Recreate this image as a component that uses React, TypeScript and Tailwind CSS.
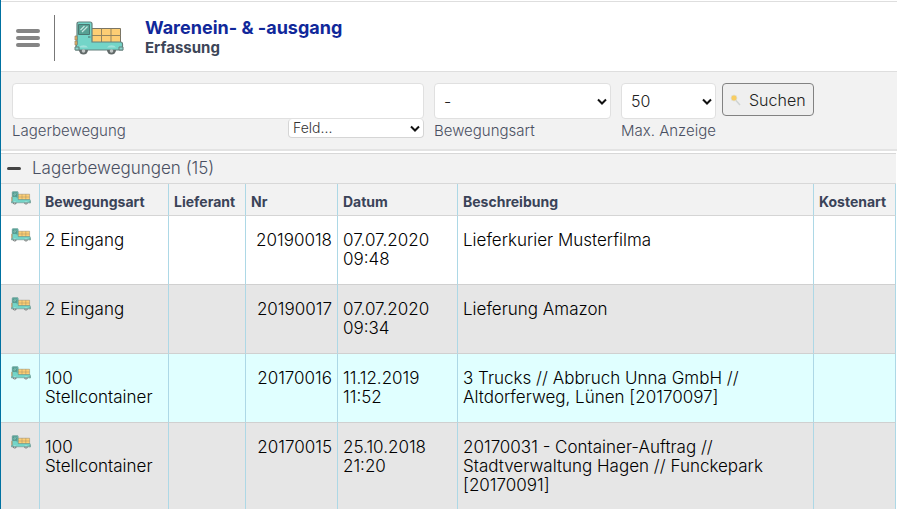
type Movement = {
  art: string;
  nr: string;
  datum: string;
  beschreibung: string;
  highlighted?: boolean;
};

const movements: Movement[] = [
  { art: "2 Eingang", nr: "20190018", datum: "07.07.2020 09:48", beschreibung: "Lieferkurier Musterfilma" },
  { art: "2 Eingang", nr: "20190017", datum: "07.07.2020 09:34", beschreibung: "Lieferung Amazon" },
  {
    art: "100 Stellcontainer",
    nr: "20170016",
    datum: "11.12.2019 11:52",
    beschreibung: "3 Trucks // Abbruch Unna GmbH // Altdorferweg, Lünen [20170097]",
    highlighted: true,
  },
  {
    art: "100 Stellcontainer",
    nr: "20170015",
    datum: "25.10.2018 21:20",
    beschreibung: "20170031 - Container-Auftrag // Stadtverwaltung Hagen // Funckepark [20170091]",
  },
];

function Truck({ className }: { className: string }) {
  return (
    <svg className={className} viewBox="0 0 50 34" fill="none" aria-hidden="true">
      <path d="M17 7.500h29.500v14H17z" fill="#fdce74" stroke="#7a7565" />
      <path d="M27.500 7.500v14M37 7.500v14M18 14.500h28.500" stroke="#94855f" />
      <path d="M2 29v-4l1-2V3q0-2 2-2h11q2 0 2 2v18h28.500q2 0 2 2v6z" fill="#73d5c8" stroke="#64807c" strokeWidth="1.200" />
      <path d="M4.500 3.500h11v10h-11z" fill="#56a194" stroke="#4b7771" />
      <path d="M6.500 9l4-4M8 11l5.500-5.500" stroke="#c5e5df" strokeWidth="1.200" />
      <path d="M14 16h2.500" stroke="#4b6864" />
      <path d="M5 26.500a5 4 0 0 1 9 0zM33 26.500a5 4 0 0 1 9 0z" fill="#a1e2da" />
      <path d="M1 15h2v4H1zM1 20h2v4H1z" fill="#f1b963" stroke="#8a7b61" strokeWidth=".7" />
      <path d="M1 26h4v3H1zM45 26h4v3h-4z" fill="#8ad6cd" stroke="#64807c" />
      <path d="M5 29a4.500 4.500 0 0 0 9 0z" fill="#626a69" />
      <path d="M33 29a4.500 4.500 0 0 0 9 0z" fill="#626a69" />
      <circle cx="9.500" cy="30" r="1.800" fill="#c2c7c6" />
      <circle cx="37.500" cy="30" r="1.800" fill="#c2c7c6" />
    </svg>
  );
}

function Chevron({ className }: { className: string }) {
  return (
    <svg className={`pointer-events-none absolute ${className}`} viewBox="0 0 10 7" fill="none" aria-hidden="true">
      <path d="M1 1.500l4 4 4-4" stroke="#111" strokeWidth="2" />
    </svg>
  );
}

function Header() {
  return (
    <header className="flex h-[71px] items-center border-y border-[#dedede] bg-white pt-0.5 pl-[15px]">
      <button type="button" aria-label="Menü" className="flex w-6 flex-col gap-[3px]">
        <span className="h-1 rounded-full bg-[#858585]" />
        <span className="h-1 rounded-full bg-[#858585]" />
        <span className="h-1 rounded-full bg-[#858585]" />
      </button>
      <div className="ml-3.5 h-[46px] w-px bg-[#777]" />
      <Truck className="ml-[19px] h-[34px] w-[50px]" />
      <div className="ml-[21px]">
        <h1 className="text-[18px] leading-5 font-bold text-[#10289a]">Warenein- &amp; -ausgang</h1>
        <p className="text-[15px] leading-5 font-bold text-[#3c4557]">Erfassung</p>
      </div>
    </header>
  );
}

function SearchBar() {
  return (
    <form className="flex items-start border-b-2 border-[#e3e3e3] bg-[#f2f2f2] pt-[11px] pb-2 pl-[11px] text-[15px] font-light text-[#4a5062]">
      <div className="min-w-0 max-w-[412px] flex-1">
        <input
          id="lager"
          type="text"
          className="block h-9 w-full rounded-sm border border-[#e0e0e0] bg-white px-2 text-base text-[#333] outline-none"
        />
        <div className="flex justify-between">
          <label htmlFor="lager" className="pt-0.5 leading-5">Lagerbewegung</label>
          <div className="relative w-[136px]">
            <select aria-label="Feld" className="block h-[19px] w-full appearance-none rounded-sm border border-t-0 border-[#d5d5d5] bg-white pl-1 text-[14px] leading-4 text-[#333]">
              <option>Feld...</option>
            </select>
            <Chevron className="top-1.5 right-1 h-[7px] w-2.5" />
          </div>
        </div>
      </div>
      <div className="ml-2.5 w-[177px]">
        <div className="relative">
          <select id="art" className="block h-9 w-full appearance-none rounded-sm border border-[#e0e0e0] bg-white pl-[9px] text-base text-[#222]">
            <option>-</option>
          </select>
          <Chevron className="top-[15px] right-1 h-[7px] w-2.5" />
        </div>
        <label htmlFor="art" className="block pt-0.5 leading-5">Bewegungsart</label>
      </div>
      <div className="ml-2.5 w-[95px]">
        <div className="relative">
          <select id="max" className="block h-9 w-full appearance-none rounded-sm border border-[#e0e0e0] bg-white pl-[9px] text-base text-[#222]">
            <option>50</option>
          </select>
          <Chevron className="top-[15px] right-1 h-[7px] w-2.5" />
        </div>
        <label htmlFor="max" className="block pt-0.5 leading-5 whitespace-nowrap">Max. Anzeige</label>
      </div>
      <button type="submit" className="ml-1.5 flex h-[33px] w-[92px] items-center rounded-sm border border-[#828282] bg-[#efefef] pl-[7px] text-base text-[#222]">
        <svg className="mr-[7px] h-3 w-3" viewBox="0 0 12 12" aria-hidden="true">
          <path d="M5.500 6l4.500 5" stroke="#cfd4d4" strokeWidth="1.500" />
          <circle cx="4" cy="4" r="3" fill="#f8cd62" stroke="#dde0dc" strokeWidth=".7" />
        </svg>
        Suchen
      </button>
    </form>
  );
}

function MovementTable() {
  const th = "border-r border-b border-r-[#add8e6] border-b-[#d5d5d5] px-[5px] pt-[3px] font-bold whitespace-nowrap";
  const td = "border-r border-b border-r-[#add8e6] border-b-[#d0d0d0] px-[5px] py-[15px]";

  return (
    <table className="w-full table-fixed border-separate border-spacing-0 text-left text-[17px] leading-[19px] font-light text-black">
      <colgroup>
        <col className="w-[39px]" />
        <col className="w-[129px]" />
        <col className="w-[77px]" />
        <col className="w-[92px]" />
        <col className="w-[120px]" />
        <col />
        <col className="w-[82px]" />
      </colgroup>
      <thead className="bg-[#f2f2f2] text-[14px] text-[#3a4358]">
        <tr className="h-8">
          <th className="border-r border-b border-r-[#add8e6] border-b-[#d5d5d5] pl-[10px] align-top">
            <Truck className="mt-[7px] h-3.5 w-5" />
          </th>
          <th className={th}>Bewegungsart</th>
          <th className={th}>Lieferant</th>
          <th className={th}>Nr</th>
          <th className={th}>Datum</th>
          <th className={th}>Beschreibung</th>
          <th className={th}>Kostenart</th>
        </tr>
      </thead>
      <tbody className="align-top">
        {movements.map((m) => (
          <tr key={m.nr} className={m.highlighted ? "bg-[#e0ffff]" : "odd:bg-white even:bg-[#e6e6e6]"}>
            <td className="border-r border-b border-r-[#add8e6] border-b-[#d0d0d0] pt-3 pl-[10px]">
              <Truck className="h-3.5 w-5" />
            </td>
            <td className={td}>{m.art}</td>
            <td className={td} />
            <td className={`${td} text-right`}>{m.nr}</td>
            <td className={td}>{m.datum}</td>
            <td className={td}>{m.beschreibung}</td>
            <td className={td} />
          </tr>
        ))}
      </tbody>
    </table>
  );
}

export default function App() {
  return (
    <div className="h-screen overflow-hidden border-l border-[#0071a1] bg-white font-['Inter','Liberation_Sans',sans-serif]">
      <div className="pt-px">
        <Header />
        <SearchBar />
        <section className="mt-0.5 pr-px">
          <h2 className="border-y border-[#d8d8d8] bg-[#f2f2f2]">
            <button type="button" className="flex h-[29px] w-full items-center pl-1.5 text-[17px] font-light text-[#4a5062]">
              <span className="mr-[11px] h-[3px] w-3.5 rounded-full bg-[#444]" />
              Lagerbewegungen (15)
            </button>
          </h2>
          <MovementTable />
        </section>
      </div>
    </div>
  );
}
